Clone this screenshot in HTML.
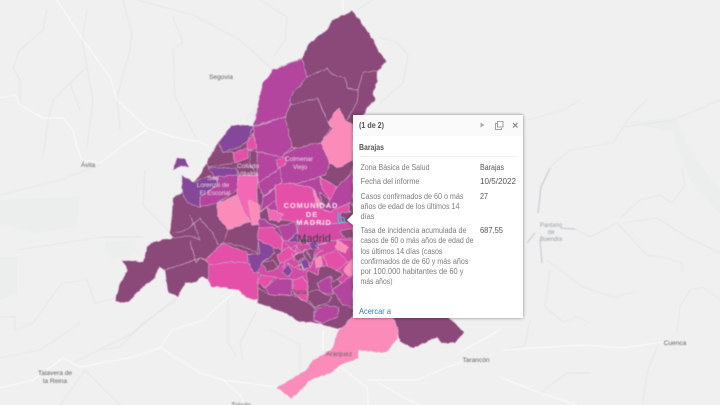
<!DOCTYPE html>
<html><head><meta charset="utf-8"><style>
html,body{margin:0;padding:0;background:#f0f0f0}
svg{display:block;position:absolute;left:0;top:0}
text{font-family:"Liberation Sans",sans-serif}
.r{fill:none;stroke:#fbfbfb;stroke-width:1.1;stroke-linejoin:round}
.v{fill:none;stroke:#e0e0e0;stroke-width:.6;stroke-linejoin:round}
.lb{font-size:6.6px;fill:#666;text-anchor:middle}
.p polygon{stroke:#d8b4cf;stroke-width:.55;stroke-linejoin:round}
.t{font-size:7.8px;fill:#7c7c7c}
.d{font-size:7.8px;fill:#555}
</style></head><body>
<div style="width:720px;height:405px;position:relative;overflow:hidden;background:#f0f0f0">
<svg width="720" height="405" viewBox="0 0 720 405" style="filter:blur(.4px)">
<defs><filter id="rough" x="-5%" y="-5%" width="110%" height="110%"><feTurbulence type="fractalNoise" baseFrequency=".18" numOctaves="2" seed="4"/><feDisplacementMap in="SourceGraphic" scale="2.6" xChannelSelector="R" yChannelSelector="G"/></filter></defs>
<!-- green -->
<g fill="#ebeeec">
<polygon points="0,200 50,198 80,196 77,227 33,233 0,223"/>
<polygon points="0,257 17,257 17,293 0,300"/>
<polygon points="105,242 133,240 138,252 113,260 105,252"/>
<polygon points="625,122 676,118 690,150 720,190 720,215 690,180 672,132"/>
<polygon points="265,90 290,60 275,100 255,125 245,120"/>
</g>
<!-- rivers -->
<g class="v">
<path d="M47 10L43 30 20 50 13 67 20 80 20 100"/>
<path d="M87 10L82 40 87 67 70 83 53 100 48 120 43 157"/>
<path d="M123 0L132 33 130 50 117 97 120 130"/>
<path d="M173 50L175 97 197 140"/><path d="M183 43L172 50M173 17L183 43"/>
<path d="M137 0L193 15 240 40 273 70"/><path d="M260 0L287 17 285 40 273 57"/>
<path d="M70 83L80 110M87 67L93 100 87 147"/>
<path d="M0 195L60 180 100 165"/><path d="M17 250L103 237 143 237"/>
<path d="M0 317L15 317 15 330 33 323 62 283 87 280 95 303 117 298"/>
<path d="M0 358L40 350 80 323"/><path d="M73 363L133 333 177 297"/>
<path d="M228 300L228 343 237 357"/><path d="M257 310L240 343 243 360"/>
<path d="M177 300L143 323 120 347 100 350"/>
<path d="M145 170L143 205 170 232"/>
<path d="M378 37L397 42 408 55 403 83 380 103"/><path d="M372 0L357 10"/>
<path d="M527 120L563 110 580 100"/><path d="M550 167L570 150 613 143 623 127 673 120 720 100"/><path d="M623 127L633 113 647 100"/>
<path d="M620 218L640 200 660 195 672 203 685 185 682 168"/>
<path d="M573 228L590 237 617 223 633 240 647 255 663 257 682 263 682 272"/>
<path d="M623 223L657 218 687 237 720 253"/>
<path d="M547 260L583 287 613 297 635 292"/><path d="M550 270L545 307 563 322 578 317 590 323"/>
<path d="M677 333L680 307 690 290 703 287 720 300"/><path d="M657 347L647 373 643 402"/>
<path d="M590 373L567 373 540 393M530 320L525 345 505 350"/>
<path d="M60 405L85 370 120 405"/><path d="M270 330L300 345 300 370"/>
</g>
<!-- roads -->
<g class="r">
<path d="M57 0L83 40 110 77 117 100 147 128 173 137 200 142 210 147"/>
<path d="M0 98L15 95 20 105 43 118 63 118 73 130 77 147 82 160 100 163 123 145 147 130"/>
<path d="M0 388L33 380 63 358 80 367 133 357 160 348 172 330 203 320 233 293"/>
<path d="M160 347L200 373 223 380 240 395 245 405"/><path d="M223 380L277 387"/>
<path d="M340 367L357 380 367 387 368 405"/><path d="M367 380L417 380 447 367 463 362"/>
<path d="M377 382L403 397 420 405"/><path d="M323 330L323 350"/><path d="M500 377L540 393 577 405"/>
<path d="M503 350L583 345 623 348 663 342"/><path d="M343 0L343 11M460 352L500 330"/>
</g>
<!-- reservoir -->
<path d="M550 168L541 187 538 213M535 233L527 243M540 240L542 263M560 228L575 229" fill="none" stroke="#ccd2d8" stroke-width="1.400"/>
<!-- map -->
<g class="p" filter="url(#rough)">
<polygon fill="#85479a" points="173,170 177,158 184,158 189,167 180,166"/>
<polygon fill="#8a4a78" points="352,11 362,23 373,40 378,50 386,61 377,72 377,83 373,93 375,100 368,107 363,115 353,130 353,322 338,329 323,325 313,322 300,322 285,313 258,303 258,300 247,298 238,290 227,288 212,287 208,280 202,276 197,282 185,283 178,297 168,292 165,270 159,267 155,278 140,290 128,302 115,302 120,283 128,270 122,260 143,262 147,247 153,242 173,238 170,233 172,213 173,198 182,192 200,175 207,162 215,147 218,143 253,126 255,120 260,95 263,83 273,70 302,58 310,42 327,30 332,20"/>
<polygon fill="#8a4a78" points="392,316 447,316 455,323 464,333 455,343 442,343 437,337 413,348 400,342 397,330"/>
<polygon fill="#fb8bb9" points="353,316 392,316 398,330 397,338 387,352 375,352 358,350 358,358 340,365 332,372 310,380 292,398 277,388 293,378 307,370 313,360 323,355 333,348 337,333"/>
<polygon fill="#b3459f" points="302,59 307,77 290,97 290,105 285,117 253,126 255,120 260,95 263,83 273,70"/>
<polygon fill="#b3459f" points="253,127 285,117 292,147 282,157 257,152"/>
<polygon fill="#8a4a78" points="285,117 290,105 318,98 325,117 331,127 321,143 310,144 298,150 292,147"/>
<polygon fill="#fb8bb9" points="335,112 340,108 345,120 353,125 353,160 338,168 330,163 321,143 333,128 328,123"/>
<polygon fill="#85479a" points="232,125 253,126 248,140 240,147 223,152 218,143"/>
<polygon fill="#e44fa8" points="253,133 257,148 248,150 247,143"/>
<polygon fill="#e44fa8" points="233,152 248,148 248,158 235,163"/>
<polygon fill="#8a4a78" points="218,143 223,152 233,152 235,163 208,167 207,162"/>
<polygon fill="#85479a" points="208,168 236,168 238,175 215,177"/>
<polygon fill="#85479a" points="182,175 193,182 207,177 215,177 218,185 200,197 200,207 187,203 182,192"/>
<polygon fill="#b3459f" points="216,177 238,175 237,190 217,203 200,207 200,197 218,185"/>
<polygon fill="#8a4a78" points="250,150 258,152 260,172 257,175 250,165"/>
<polygon fill="#b3459f" points="257,152 282,157 280,168 258,183 257,175"/>
<polygon fill="#b3459f" points="282,157 292,150 310,144 321,143 330,163 325,175 320,177 300,183 280,185 280,168"/>
<polygon fill="#e44fa8" points="276,160 287,157 285,165 278,168"/>
<polygon fill="#f267b4" points="238,176 257,175 258,203 260,218 253,225 250,222 243,210 237,195"/>
<polygon fill="#fb8bb9" points="217,203 237,195 243,210 250,222 228,230 218,217"/>
<polygon fill="#b3459f" points="258,183 280,168 282,182 263,197"/>
<polygon fill="#b3459f" points="263,197 280,185 276,200 267,208 260,212"/>
<polygon fill="#b3459f" points="250,222 260,218 278,227 272,230 260,228 258,240 250,235"/>
<polygon fill="#8a4a78" points="228,230 250,222 259,223 258,240 258,253 247,248 223,242"/>
<polygon fill="#e44fa8" points="205,260 223,243 247,253 247,263 232,262 210,265"/>
<polygon fill="#e44fa8" points="208,265 232,262 247,263 258,272 258,300 247,298 238,290 227,288 212,287 208,280"/>
<polygon fill="#85479a" points="247,255 260,253 258,240 273,247 275,253 262,263 260,272 253,273"/>
<polygon fill="#b3459f" points="280,185 300,183 320,177 337,187 350,175 353,165 353,205 349,203 330,212 317,207 312,188 290,183"/>
<polygon fill="#e44fa8" points="320,177 337,187 330,200 322,188"/>
<polygon fill="#fb8bb9" points="313,188 322,205 317,207"/>
<polygon fill="#8a4a78" points="320,192 330,200 327,207 322,203"/>
<polygon fill="#e44fa8" points="275,185 290,183 312,188 317,207 330,212 349,203 350,222 330,224 295,222 283,220 277,212"/>
<polygon fill="#b3459f" points="260,212 276,200 275,185 277,212 283,220 267,208"/>
<polygon fill="#f267b4" points="267,208 283,214 280,222 270,220"/>
<polygon fill="#fb8bb9" points="248,200 260,205 258,225 252,225"/>
<polygon fill="#e44fa8" points="258,228 273,227 283,240 282,250 273,247 258,240"/>
<polygon fill="#b3459f" points="278,227 295,222 298,232 287,242 283,240"/>
<polygon fill="#85479a" points="287,242 298,232 298,243"/>
<polygon fill="#d24ca5" points="298,222 330,224 353,222 353,240 337,240 317,245 298,243"/>
<polygon fill="#8a4a78" points="340,213 353,212 353,222 342,222"/>
<polygon fill="#d24ca5" points="283,240 298,243 320,245 337,240 353,240 353,290 330,276 317,283 307,283 302,277 293,280 277,278 260,275 258,272 262,263 273,260 278,268 280,263"/>
<polygon fill="#8a4a78" points="262,263 273,260 278,268 267,272"/>
<polygon fill="#e44fa8" points="277,255 288,247 298,253 288,260 280,263"/>
<polygon fill="#e44fa8" points="260,275 275,277 265,288 258,283"/>
<polygon fill="#b3459f" points="265,288 277,278 292,280 292,295 270,295"/>
<polygon fill="#e44fa8" points="293,280 302,277 307,283 307,302 300,298 293,293"/>
<polygon fill="#8a4a78" points="305,250 317,247 312,262 300,270 298,258"/>
<polygon fill="#8a4a78" points="294,256 303,251 305,257 297,262"/>
<polygon fill="#8a4a78" points="307,270 318,275 320,267 330,265 343,275 333,282 332,277 318,292 308,295"/>
<polygon fill="#85479a" points="282,272 288,263 292,272 288,276"/>
<polygon fill="#85479a" points="309,243 317,240 318,248 312,250"/>
<polygon fill="#8a4a78" points="300,240 306,237 307,244 301,245"/>
<polygon fill="#fb8bb9" points="315,258 322,256 322,266 316,268"/>
<polygon fill="#b3459f" points="317,283 330,276 333,295 320,292"/>
<polygon fill="#b3459f" points="332,290 353,275 353,308 343,305 337,297"/>
<polygon fill="#8a4a78" points="308,292 318,290 332,298 327,303 315,307 308,300"/>
<polygon fill="#b3459f" points="317,308 327,305 339,308 337,317 322,323 313,320"/>
<polygon fill="#8a4a78" points="258,288 270,295 292,295 307,302 315,308 313,320 323,325 313,322 300,322 285,313 258,303"/>
<polygon fill="#e44fa8" points="323,255 337,250 348,262 337,270 328,267"/>
<polygon fill="#fb8bb9" points="337,240 348,247 345,253 335,248"/>
<polygon fill="#fb8bb9" points="343,270 353,258 353,275 348,276"/>
<polygon fill="#8a4a78" points="340,231 353,228 353,238 345,238"/>
<polygon fill="#85479a" points="300,262 306,258 310,266 304,270"/>
</g>
<!-- interior lines on dark -->
<g fill="none" stroke="#d8b4cf" stroke-width=".6" filter="url(#rough)">
<path d="M307 77L327 68 333 75 345 78 347 88 358 90 363 72 378 71"/>
<path d="M358 90V100L347 120"/><path d="M318 98L325 117"/>
<path d="M173 238L190 236 200 240 190 215"/><path d="M159 267L165 270 185 263 200 258 205 260"/>
<path d="M173 233L187 230 200 218 208 228 212 232 218 245 223 243"/>
<path d="M190 240L196 262 200 258"/>
<path d="M285 243l6 5 5-3 4 7 6-3 4 6M292 253l2 8M298 245l-3 8M306 252l5 6M288 262l6 6 6-3 5 6M300 262l3 10M283 268l2-6"/>
<path d="M323 250l-8 6-3 8M315 245l5 5M296 268l5 2M310 268l3-5"/>
</g>
<path d="M338 212v9q0 1.500 2 1.500h2.500q2 0 2-2.500t-2-2.500h-3" fill="none" stroke="#17d9e6" stroke-width="1.100"/>
<!-- map labels -->
<text class="lb" x="221" y="79">Segovia</text>
<text class="lb" x="88" y="167">Ávila</text>
<text class="lb" x="55" y="375">Talavera de</text>
<text class="lb" x="55" y="383">la Reina</text>
<text class="lb" x="241" y="407">Toledo</text>
<text class="lb" x="339" y="356">Aranjuez</text>
<text class="lb" x="476" y="362">Tarancón</text>
<text class="lb" x="675" y="345">Cuenca</text>
<text class="lb" x="551" y="227" style="fill:#98a2ac;font-size:6px">Pantano</text>
<text class="lb" x="551" y="234" style="fill:#98a2ac;font-size:6px">de</text>
<text class="lb" x="551" y="241" style="fill:#98a2ac;font-size:6px">Buendía</text>
<g fill="#ecdce8" text-anchor="middle" font-size="6.500">
<text x="248" y="168">Collado</text>
<text x="248" y="176">Villalba</text>
<text x="299" y="161">Colmenar</text>
<text x="300" y="169">Viejo</text>
<text x="213" y="180">San</text>
<text x="213" y="187">Lorenzo de</text>
<text x="215" y="195">El Escorial</text>
</g>
<g text-anchor="middle" font-size="7.500" font-weight="bold" fill="#f7e6f1" letter-spacing=".9">
<text x="311" y="208">COMUNIDAD</text>
<text x="312" y="217">DE</text>
<text x="314" y="225">MADRID</text>
</g>
<text x="314" y="242" text-anchor="middle" font-size="11" fill="#3f3c40">Madrid</text>
<text x="299" y="294" text-anchor="middle" font-size="6.500" fill="#5c5a5e">Parla</text>
</svg>
<!-- popup -->
<svg width="720" height="405" viewBox="0 0 720 405" style="filter:blur(.25px)">
<defs><filter id="s" x="-10%" y="-10%" width="120%" height="120%"><feDropShadow dx="0" dy="0" stdDeviation="1.500" flood-color="#000" flood-opacity=".45"/></filter></defs>
<g filter="url(#s)"><path d="M353 115H523V318H353V225L347 220 353 214Z" fill="#fff"/></g>
<rect x="353" y="115" width="170" height="21" fill="#fafafa"/>
<rect x="359" y="156" width="159" height=".8" fill="#eee"/>
<text x="359" y="128" font-size="8" font-weight="bold" fill="#555" textLength="25" lengthAdjust="spacingAndGlyphs">(1 de 2)</text>
<path d="M480.500 122.500L484.500 125 480.500 127.500Z" fill="#aaa"/>
<path d="M497 123.500h-1.500v6h6v-1.500M497.500 121.500h5.500v5.500h-5.500Z" fill="none" stroke="#888" stroke-width=".8"/>
<path d="M513 123l4.500 4.500M517.500 123L513 127.500" stroke="#777" stroke-width=".9" fill="none"/>
<text x="359" y="150" font-size="8" font-weight="bold" fill="#555" textLength="25" lengthAdjust="spacingAndGlyphs">Barajas</text>
<g>
<text class="t" x="360.500" y="170" textLength="69" lengthAdjust="spacingAndGlyphs">Zona Básica de Salud</text>
<text class="t" x="360.500" y="184" textLength="59" lengthAdjust="spacingAndGlyphs">Fecha del informe</text>
<text class="t" x="360.500" y="199" textLength="103" lengthAdjust="spacingAndGlyphs">Casos confirmados de 60 o más</text>
<text class="t" x="360.500" y="209" textLength="99" lengthAdjust="spacingAndGlyphs">años de edad de los últimos 14</text>
<text class="t" x="360.500" y="219" textLength="14" lengthAdjust="spacingAndGlyphs">días</text>
<text class="t" x="360.500" y="233" textLength="106" lengthAdjust="spacingAndGlyphs">Tasa de incidencia acumulada de</text>
<text class="t" x="360.500" y="243" textLength="113" lengthAdjust="spacingAndGlyphs">casos de 60 o más años de edad de</text>
<text class="t" x="360.500" y="254" textLength="82" lengthAdjust="spacingAndGlyphs">los últimos 14 días (casos</text>
<text class="t" x="360.500" y="264" textLength="108" lengthAdjust="spacingAndGlyphs">confirmados de de 60 y más años</text>
<text class="t" x="360.500" y="274" textLength="103" lengthAdjust="spacingAndGlyphs">por 100.000 habitantes de 60 y</text>
<text class="t" x="360.500" y="284" textLength="32" lengthAdjust="spacingAndGlyphs">más años)</text>
<text class="d" x="480" y="170" textLength="24" lengthAdjust="spacingAndGlyphs">Barajas</text>
<text class="d" x="480" y="184" textLength="36" lengthAdjust="spacingAndGlyphs">10/5/2022</text>
<text class="d" x="480" y="199" textLength="8" lengthAdjust="spacingAndGlyphs">27</text>
<text class="d" x="480" y="233" textLength="23" lengthAdjust="spacingAndGlyphs">687,55</text>
</g>
<text x="359" y="314" font-size="8" fill="#2b7fb3" textLength="32" lengthAdjust="spacingAndGlyphs">Acercar a</text>
</svg>
</div>
</body></html>
